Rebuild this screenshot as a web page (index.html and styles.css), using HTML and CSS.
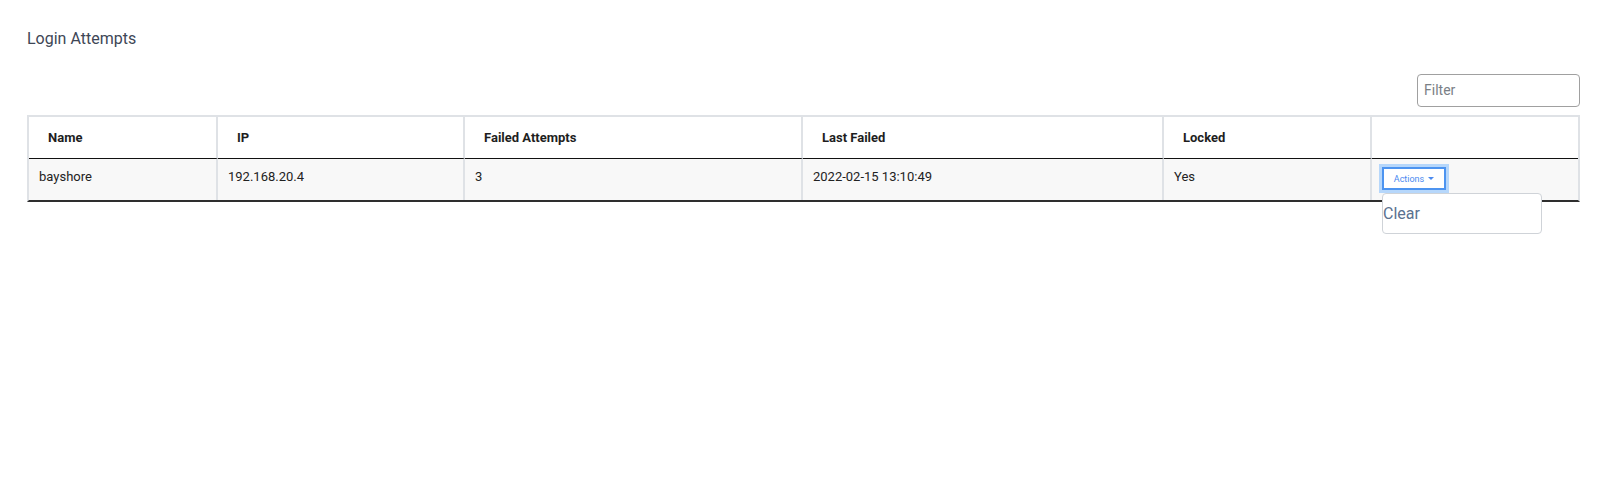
FILE: index.html
```html
<!DOCTYPE html>
<html>
<head>
<meta charset="utf-8">
<link rel="stylesheet" href="styles.css">
</head>
<body>
<div class="page">
  <h1 class="title">Login Attempts</h1>
  <div class="toolbar">
    <input class="filter" type="text" placeholder="Filter">
  </div>
  <div class="grid-wrap">
    <table class="grid">
      <thead>
        <tr>
          <th class="c1">Name</th>
          <th class="c2">IP</th>
          <th class="c3">Failed Attempts</th>
          <th class="c4">Last Failed</th>
          <th class="c5">Locked</th>
          <th class="c6"></th>
        </tr>
      </thead>
      <tbody>
        <tr>
          <td>bayshore</td>
          <td>192.168.20.4</td>
          <td>3</td>
          <td>2022-02-15 13:10:49</td>
          <td>Yes</td>
          <td class="act">
            <button class="btn-actions">Actions <span class="caret"></span></button>
          </td>
        </tr>
      </tbody>
    </table>
    <div class="menu"><span class="menu-item">Clear</span></div>
  </div>
</div>
</body>
</html>
```
FILE: styles.css
```css
* { box-sizing: border-box; }
html, body { height: 100%; }
body {
  margin: 0;
  background: #fff;
  font-family: Roboto, "Liberation Sans", sans-serif;
  color: #212529;
}
.page {
  min-height: 100%;
  padding: 29px 23px 0 27px;
}
.title {
  margin: 0;
  font-size: 16px;
  font-weight: 400;
  color: #3e4656;
  line-height: 20px;
}
.toolbar {
  display: flex;
  justify-content: flex-end;
  margin-top: 25px;
  width: 1553px;
}
.filter {
  width: 163px;
  height: 33px;
  border: 1px solid #a0a0a0;
  border-radius: 4px;
  padding: 0 6px 2px;
  font-family: Roboto, "Liberation Sans", sans-serif;
  font-size: 14px;
  color: #333;
  outline: none;
}
.filter::placeholder { color: #7a7f86; }
.grid-wrap {
  position: relative;
  margin-top: 8px;
  width: 1553px;
  padding-bottom: 60px;
}
.grid {
  width: 1553px;
  border-collapse: separate;
  border-spacing: 0;
  table-layout: fixed;
  border-top: 2px solid #dfe2e6;
  border-left: 2px solid #dfe2e6;
  border-right: 2px solid #dfe2e6;
  border-bottom: 2px solid #2e2e2e;
  font-size: 13px;
}
.c1 { width: 189px; }
.c2 { width: 247px; }
.c3 { width: 338px; }
.c4 { width: 361px; }
.c5 { width: 208px; }
.c6 { width: 206px; }
.grid th {
  text-align: left;
  font-weight: 700;
  color: #1e1e1e;
  height: 42px;
  padding: 0 19px;
  border-right: 2px solid #dfe2e6;
  border-bottom: 1px solid #111;
  vertical-align: middle;
}
.grid td {
  background: #f8f8f8;
  height: 41px;
  padding: 10px 10px 0 10px;
  vertical-align: top;
  border-right: 2px solid #dfe2e6;
  color: #222;
}
.grid th:last-child,
.grid td:last-child { border-right: 0; }
.grid td.act { padding: 8px 10px 0 10px; }
.btn-actions {
  background: #fff;
  border: 2px solid #4d94f0;
  box-shadow: 0 0 0 3px #b6d7fb;
  color: #4b8af0;
  font-family: Roboto, "Liberation Sans", sans-serif;
  font-size: 9px;
  width: 64px;
  height: 23px;
  padding: 0;
  display: flex;
  align-items: center;
  justify-content: center;
  gap: 4px;
}
.caret {
  width: 0; height: 0;
  border-left: 3px solid transparent;
  border-right: 3px solid transparent;
  border-top: 3px solid #4b8af0;
}
.menu {
  position: absolute;
  left: 1355px;
  top: 78px;
  width: 160px;
  height: 41px;
  background: #fff;
  border: 1px solid #cfd3d8;
  border-radius: 4px;
  padding-top: 10px;
  z-index: 2;
}
.menu-item {
  display: block;
  font-size: 16px;
  line-height: 20px;
  color: #5a7190;
}
```
